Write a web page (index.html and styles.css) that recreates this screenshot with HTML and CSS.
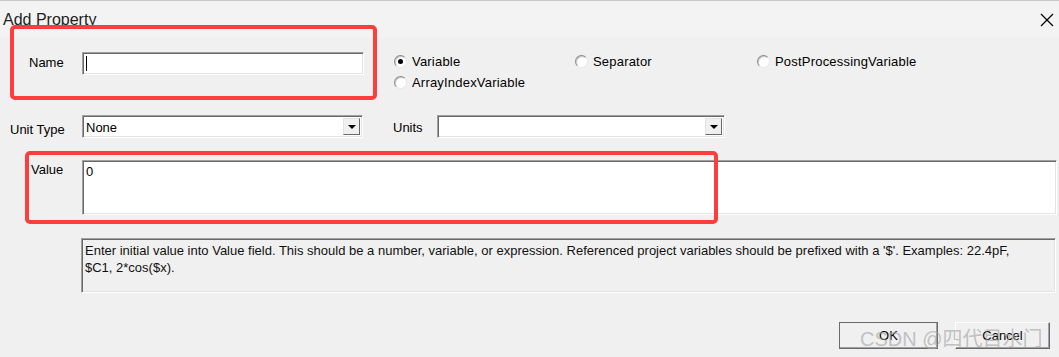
FILE: index.html
```html
<!DOCTYPE html>
<html lang="en">
<head>
    <meta charset="UTF-8">
    <meta name="viewport" content="width=device-width, initial-scale=1.0">
    <title>Add Property</title>
    <link rel="stylesheet" href="styles.css">
</head>
<body>
    <div class="dialog">
        <div class="titlebar">
            <span class="title">Add Property</span>
            <svg class="close" width="14" height="14" viewBox="0 0 14 14">
                <path d="M1 1 L13 13 M13 1 L1 13" stroke="#000" stroke-width="1.2" fill="none"/>
            </svg>
        </div>

        <div class="row row-name">
            <label class="field-label label-name">Name</label>
            <div class="edit edit-name"><span class="caret"></span></div>
            <div class="radio-grid">
                <div class="radio"><span class="dot checked"></span>Variable</div>
                <div class="radio"><span class="dot"></span>Separator</div>
                <div class="radio"><span class="dot"></span>PostProcessingVariable</div>
                <div class="radio"><span class="dot"></span>ArrayIndexVariable</div>
            </div>
        </div>

        <div class="row row-unit">
            <label class="field-label label-unit">Unit Type</label>
            <div class="combo combo-type">
                <span class="combo-text">None</span>
                <span class="combo-btn"><span class="arrow"></span></span>
            </div>
            <label class="units-label">Units</label>
            <div class="combo combo-units">
                <span class="combo-text"></span>
                <span class="combo-btn"><span class="arrow"></span></span>
            </div>
        </div>

        <div class="row row-value">
            <label class="field-label label-value">Value</label>
            <div class="edit edit-value">0</div>
        </div>

        <div class="help">
            Enter initial value into Value field. This should be a number, variable, or expression. Referenced project variables should be prefixed with a '$'. Examples: 22.4pF,<br>$C1, 2*cos($x).
        </div>

        <div class="buttons">
            <div class="btn btn-default">OK</div>
            <div class="btn">Cancel</div>
        </div>

        <!-- annotation marks drawn over the dialog -->
        <div class="mark mark-name"></div>
        <div class="mark mark-value"></div>
        <div class="watermark">CSDN @四代目水门</div>
    </div>
</body>
</html>
```

FILE: styles.css
```css
body {
    margin: 0;
    background-color: #f0f0f0;
    font-family: 'Liberation Sans', Arial, sans-serif;
    font-size: 13px;
    color: #000;
    overflow: hidden;
}
.dialog {
    position: relative;
    width: 1059px;
    height: 357px;
    border-top: 1px solid #c8c8c8;
    box-sizing: border-box;
}
.titlebar {
    height: 37px;
    display: flex;
    align-items: center;
    justify-content: space-between;
    padding: 0 5px 0 3px;
    background-color: #f3f3f3;
}
.title {
    font-size: 16px;
    color: #222;
}
.row {
    display: flex;
    align-items: flex-start;
}
.field-label {
    width: 82px;
    box-sizing: border-box;
    flex-shrink: 0;
}
.label-name {
    padding-left: 29px;
    padding-top: 4px;
}
.label-unit {
    padding-left: 10px;
    padding-top: 7px;
}
.label-value {
    padding-left: 31px;
    padding-top: 2px;
}
.edit {
    background-color: #fff;
    border: 1px solid;
    border-color: #a0a0a0 #fff #fff #a0a0a0;
    box-shadow: inset 1px 1px 0 #696969, inset -1px -1px 0 #e3e3e3;
    box-sizing: border-box;
}
.row-name {
    margin-top: 13px;
}
.edit-name {
    width: 282px;
    height: 23px;
    margin-top: 1px;
    position: relative;
}
.caret {
    position: absolute;
    left: 3px;
    top: 3px;
    width: 1px;
    height: 15px;
    background-color: #000;
}
.radio-grid {
    margin-left: 30px;
    display: grid;
    grid-template-columns: 181px 182px auto;
    grid-auto-rows: 21px;
    letter-spacing: 0.2px;
}
.radio {
    display: flex;
    align-items: center;
    gap: 5px;
}
.dot {
    width: 13px;
    height: 13px;
    border-radius: 50%;
    box-sizing: border-box;
    border: 1px solid #8a8a8a;
    border-bottom-color: #e8e8e8;
    border-right-color: #e8e8e8;
    background-color: #fff;
    box-shadow: inset 1px 1px 0 #c8c8c8;
    display: flex;
    align-items: center;
    justify-content: center;
}
.dot.checked::after {
    content: "";
    width: 5px;
    height: 5px;
    border-radius: 50%;
    background-color: #000;
}
.row-unit {
    margin-top: 22px;
}
.combo {
    height: 23px;
    display: flex;
    align-items: stretch;
    background-color: #fff;
    border: 1px solid;
    border-color: #a0a0a0 #fff #fff #a0a0a0;
    box-shadow: inset 1px 1px 0 #696969, inset -1px -1px 0 #e3e3e3;
    box-sizing: border-box;
    padding: 2px;
}
.combo-type {
    width: 281px;
}
.combo-units {
    width: 288px;
}
.combo-text {
    flex: 1;
    line-height: 19px;
    padding-left: 1px;
}
.combo-btn {
    width: 17px;
    background-color: #f0f0f0;
    border: 1px solid;
    border-color: #e3e3e3 #696969 #696969 #e3e3e3;
    box-sizing: border-box;
    display: flex;
    align-items: center;
    justify-content: center;
}
.arrow {
    width: 0;
    height: 0;
    border-left: 4px solid transparent;
    border-right: 4px solid transparent;
    border-top: 4px solid #000;
    margin-top: 1px;
}
.units-label {
    margin-left: 30px;
    width: 44px;
    padding-top: 5px;
}
.row-value {
    margin-top: 22px;
}
.edit-value {
    width: 975px;
    height: 55px;
    padding: 3px 3px;
    line-height: 15px;
}
.help {
    margin: 23px 0 0 81px;
    width: 975px;
    height: 55px;
    box-sizing: border-box;
    border: 1px solid;
    border-color: #a0a0a0 #fff #fff #a0a0a0;
    box-shadow: inset 1px 1px 0 #696969, inset -1px -1px 0 #e3e3e3;
    padding: 3px 3px;
    font-family: 'Liberation Sans', Arial, sans-serif;
    font-size: 13px;
    line-height: 17px;
    color: #111;
}
.buttons {
    margin-top: 29px;
    display: flex;
    justify-content: flex-end;
    gap: 17px;
    padding-right: 9px;
}
.btn {
    width: 95px;
    height: 27px;
    box-sizing: border-box;
    background-color: #f0f0f0;
    border: 1px solid;
    border-color: #fff #696969 #696969 #fff;
    box-shadow: inset -1px -1px 0 #a0a0a0;
    display: flex;
    align-items: center;
    justify-content: center;
}
.btn-default {
    width: 99px;
    outline: 1px solid #6a6a6a;
    outline-offset: -1px;
}
.mark {
    position: absolute;
    border: 4px solid #fe3d3d;
    border-radius: 5px;
    box-sizing: border-box;
}
.mark-name {
    left: 10px;
    top: 24px;
    width: 367px;
    height: 75px;
}
.mark-value {
    left: 25px;
    top: 150px;
    width: 693px;
    height: 73px;
}
.watermark {
    position: absolute;
    left: 860px;
    top: 322px;
    font-size: 20px;
    color: rgba(165, 165, 165, 0.65);
    font-family: 'Liberation Sans', 'Noto Sans CJK SC', sans-serif;
    white-space: nowrap;
}
```
